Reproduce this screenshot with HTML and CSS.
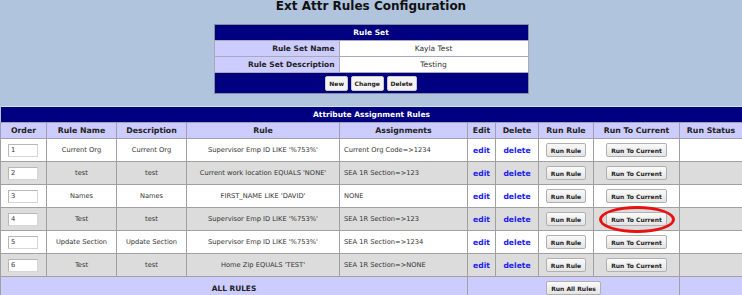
FILE: index.html
```html
<!DOCTYPE html>
<html lang="en">
<head>
    <meta charset="UTF-8">
    <meta name="viewport" content="width=device-width, initial-scale=1.0">
    <title>Ext Attr Rules Configuration</title>
    <link rel="stylesheet" href="styles.css">
</head>
<body>
    <h1>Ext Attr Rules Configuration</h1>

    <table class="ruleset">
        <tr><th colspan="2" class="bar">Rule Set</th></tr>
        <tr><td class="label">Rule Set Name</td><td class="value">Kayla Test</td></tr>
        <tr><td class="label">Rule Set Description</td><td class="value">Testing</td></tr>
        <tr>
            <td colspan="2" class="bar actions">
                <button class="btn">New</button>
                <button class="btn">Change</button>
                <button class="btn">Delete</button>
            </td>
        </tr>
    </table>

    <table class="rules">
        <colgroup>
            <col style="width:46px">
            <col style="width:70px">
            <col style="width:70px">
            <col style="width:153px">
            <col style="width:128px">
            <col style="width:28px">
            <col style="width:43px">
            <col style="width:55px">
            <col style="width:86px">
            <col style="width:63px">
        </colgroup>
        <tr><th colspan="10" class="bar">Attribute Assignment Rules</th></tr>
        <tr class="heads">
            <th>Order</th>
            <th>Rule Name</th>
            <th>Description</th>
            <th>Rule</th>
            <th>Assignments</th>
            <th>Edit</th>
            <th>Delete</th>
            <th>Run Rule</th>
            <th>Run To Current</th>
            <th>Run Status</th>
        </tr>
        <tr>
            <td class="order"><input type="text" value="1"></td>
            <td>Current Org</td>
            <td>Current Org</td>
            <td>Supervisor Emp ID LIKE '%753%'</td>
            <td class="assign">Current Org Code=&gt;1234</td>
            <td><a href="#">edit</a></td>
            <td><a href="#">delete</a></td>
            <td><button class="btn">Run Rule</button></td>
            <td><button class="btn">Run To Current</button></td>
            <td></td>
        </tr>
        <tr class="alt">
            <td class="order"><input type="text" value="2"></td>
            <td>test</td>
            <td>test</td>
            <td>Current work location EQUALS 'NONE'</td>
            <td class="assign">SEA 1R Section=&gt;123</td>
            <td><a href="#">edit</a></td>
            <td><a href="#">delete</a></td>
            <td><button class="btn">Run Rule</button></td>
            <td><button class="btn">Run To Current</button></td>
            <td></td>
        </tr>
        <tr>
            <td class="order"><input type="text" value="3"></td>
            <td>Names</td>
            <td>Names</td>
            <td>FIRST_NAME LIKE 'DAVID'</td>
            <td class="assign">NONE</td>
            <td><a href="#">edit</a></td>
            <td><a href="#">delete</a></td>
            <td><button class="btn">Run Rule</button></td>
            <td><button class="btn">Run To Current</button></td>
            <td></td>
        </tr>
        <tr class="alt">
            <td class="order"><input type="text" value="4"></td>
            <td>Test</td>
            <td>test</td>
            <td>Supervisor Emp ID LIKE '%753%'</td>
            <td class="assign">SEA 1R Section=&gt;123</td>
            <td><a href="#">edit</a></td>
            <td><a href="#">delete</a></td>
            <td><button class="btn">Run Rule</button></td>
            <td class="marked"><button class="btn">Run To Current</button><span class="circle"></span></td>
            <td></td>
        </tr>
        <tr>
            <td class="order"><input type="text" value="5"></td>
            <td>Update Section</td>
            <td>Update Section</td>
            <td>Supervisor Emp ID LIKE '%753%'</td>
            <td class="assign">SEA 1R Section=&gt;1234</td>
            <td><a href="#">edit</a></td>
            <td><a href="#">delete</a></td>
            <td><button class="btn">Run Rule</button></td>
            <td><button class="btn">Run To Current</button></td>
            <td></td>
        </tr>
        <tr class="alt">
            <td class="order"><input type="text" value="6"></td>
            <td>Test</td>
            <td>test</td>
            <td>Home Zip EQUALS 'TEST'</td>
            <td class="assign">SEA 1R Section=&gt;NONE</td>
            <td><a href="#">edit</a></td>
            <td><a href="#">delete</a></td>
            <td><button class="btn">Run Rule</button></td>
            <td><button class="btn">Run To Current</button></td>
            <td></td>
        </tr>
        <tr class="all">
            <td colspan="5">ALL RULES</td>
            <td colspan="4"><button class="btn">Run All Rules</button></td>
            <td></td>
        </tr>
    </table>
</body>
</html>
```

FILE: styles.css
```css
body {
    margin: 0;
    background-color: #b0c4de;
    font-family: "DejaVu Sans", Verdana, sans-serif;
    color: #333;
}

h1 {
    margin: 0;
    height: 24px;
    line-height: 13px;
    font-size: 12px;
    text-align: center;
    color: #111;
}

table {
    border-collapse: collapse;
}

.bar {
    background-color: #000080;
    color: #fff;
    font-size: 7.5px;
    font-weight: bold;
}

/* rule set box */

.ruleset {
    margin: 0 auto;
    width: 315px;
    border: 1px solid #8a8a9a;
}

.ruleset th {
    height: 15px;
    padding: 0;
}

.ruleset td {
    border: 1px solid #a9a9b9;
    padding: 0 4px;
    height: 15px;
}

.ruleset .label {
    width: 116px;
    background-color: #ccccff;
    text-align: right;
    font-weight: bold;
    font-size: 7.5px;
    color: #222;
}

.ruleset .value {
    background-color: #fff;
    text-align: center;
    font-size: 7.5px;
}

.ruleset .actions {
    height: 20px;
    text-align: center;
    border: none;
}

/* rules table */

.rules {
    margin-top: 12px;
    width: 742px;
    table-layout: fixed;
}

.rules th.bar {
    height: 15px;
    padding: 0;
    border-top: 1px solid #d8e0ec;
}

.heads th {
    height: 15px;
    padding: 0;
    background-color: #ccccff;
    border: 1px solid #a0a0b0;
    font-size: 7.8px;
    color: #222;
}

.rules td {
    height: 22px;
    padding: 0;
    border: 1px solid #a0a0a0;
    background-color: #fff;
    text-align: center;
    font-size: 6.7px;
    white-space: nowrap;
}

.rules tr.alt td {
    background-color: #dcdcdc;
}

.rules td.assign {
    text-align: left;
    padding-left: 4px;
}

.order input {
    display: block;
    box-sizing: border-box;
    width: 30px;
    height: 13px;
    margin-left: 7px;
    padding: 0 2px;
    border: 1px solid #d6d6d6;
    border-top-color: #b8b8b8;
    border-left-color: #b8b8b8;
    background: #fff;
    font-family: "DejaVu Sans", Verdana, sans-serif;
    font-size: 6.7px;
    color: #333;
}

.rules a {
    color: #2020ee;
    font-weight: bold;
    font-size: 7.6px;
    text-decoration: none;
}

.btn {
    padding: 1px 4px;
    height: 14px;
    border: 1px solid #b0b0b0;
    border-radius: 2px;
    background: linear-gradient(#fafafa, #e4e4e4);
    font-family: "DejaVu Sans", Verdana, sans-serif;
    font-size: 6px;
    font-weight: bold;
    color: #222;
}

.ruleset .btn {
    height: 15px;
    padding: 1px 3px;
    background: #f4f4f4;
    border: 1px solid #c8c8c8;
}

.rules tr.all td {
    background-color: #ccccff;
    font-weight: bold;
    font-size: 7.4px;
    color: #222;
}

.marked {
    position: relative;
}

.circle {
    position: absolute;
    left: 5px;
    top: -2px;
    width: 70px;
    height: 21px;
    border: 3px solid #e81010;
    border-radius: 50%;
}
```
